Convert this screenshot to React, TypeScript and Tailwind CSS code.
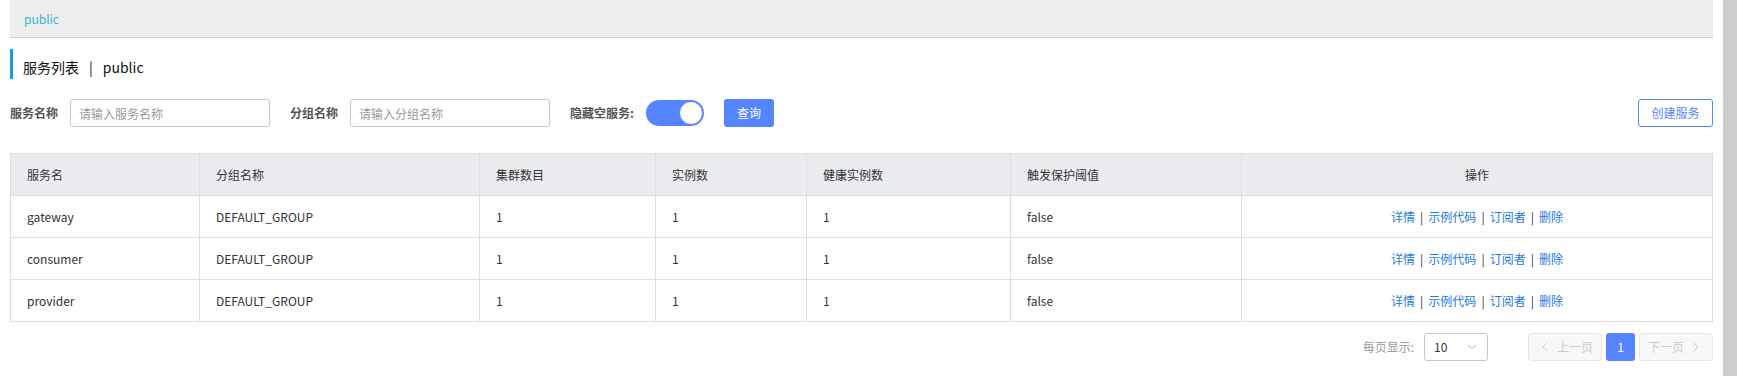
import { ChevronDown, ChevronLeft, ChevronRight } from 'lucide-react';

const FONT = "font-['Noto_Sans_CJK_SC','Noto_Sans',sans-serif]";

const columns = [
  { title: '服务名', width: 'w-[189px]' },
  { title: '分组名称', width: 'w-[280px]' },
  { title: '集群数目', width: 'w-[176px]' },
  { title: '实例数', width: 'w-[151px]' },
  { title: '健康实例数', width: 'w-[204px]' },
  { title: '触发保护阈值', width: 'w-[231px]' },
];

const rows = [
  { name: 'gateway', group: 'DEFAULT_GROUP', clusters: 1, instances: 1, healthy: 1, threshold: 'false' },
  { name: 'consumer', group: 'DEFAULT_GROUP', clusters: 1, instances: 1, healthy: 1, threshold: 'false' },
  { name: 'provider', group: 'DEFAULT_GROUP', clusters: 1, instances: 1, healthy: 1, threshold: 'false' },
];

function Actions() {
  const items = ['详情', '示例代码', '订阅者', '删除'];
  return (
    <div className="flex items-center justify-center">
      {items.map((item, i) => (
        <span key={item} className="flex items-center">
          {i > 0 && <span className="mx-[5px] text-[#333]">|</span>}
          <a className="text-[#1d7ce0] cursor-pointer">{item}</a>
        </span>
      ))}
    </div>
  );
}

export default function App() {
  return (
    <div className={`flex h-[376px] w-[1737px] bg-white text-xs text-[#333] ${FONT}`}>
      <div className="flex-1 px-[10px]">
        {/* ── breadcrumb bar ─────────────────────── */}
        <div className="flex h-[38px] items-center border-b border-[#cfcfcf] bg-[#eeeeee] px-[14px]">
          <span className="text-[#2fb7d6]">public</span>
        </div>

        {/* ── page title ─────────────────────────── */}
        <div className="mt-[11px] flex h-[30px] items-center border-l-[3px] border-[#1a9bd7] pl-[10px] pt-[6px] text-sm text-[#111]">
          <span>服务列表</span>
          <span className="mx-[10px]">|</span>
          <span>public</span>
        </div>

        {/* ── search form ────────────────────────── */}
        <div className="mt-5 flex h-[28px] items-center">
          <label className="mr-3 font-bold text-[#555]">服务名称</label>
          <input
            placeholder="请输入服务名称"
            className="mr-5 h-[28px] w-[200px] rounded-[3px] border border-[#c4c6cf] px-2 text-xs placeholder-[#999] outline-none"
          />
          <label className="mr-3 font-bold text-[#555]">分组名称</label>
          <input
            placeholder="请输入分组名称"
            className="mr-5 h-[28px] w-[200px] rounded-[3px] border border-[#c4c6cf] px-2 text-xs placeholder-[#999] outline-none"
          />
          <label className="mr-3 font-bold text-[#555]">隐藏空服务:</label>
          <div className="mr-5 flex h-[26px] w-[58px] items-center justify-end rounded-full bg-[#5584ff] pr-px">
            <div className="h-[24px] w-[24px] rounded-full border border-[#5584ff] bg-white" />
          </div>
          <button className="h-[28px] w-[50px] rounded-[3px] bg-[#5584ff] text-white">查询</button>
          <div className="flex-1" />
          <button className="h-[28px] w-[75px] rounded-[3px] border border-[#5584ff] bg-white text-[#5584ff]">
            创建服务
          </button>
        </div>

        {/* ── service table ──────────────────────── */}
        <table className="mt-[26px] w-full table-fixed border-collapse border border-[#dcdee3]">
          <thead>
            <tr className="h-[42px] bg-[#ebecf0]">
              {columns.map((c) => (
                <th key={c.title} className={`${c.width} border border-[#dcdee3] px-4 text-left font-normal`}>
                  {c.title}
                </th>
              ))}
              <th className="border border-[#dcdee3] px-4 text-center font-normal">操作</th>
            </tr>
          </thead>
          <tbody>
            {rows.map((r) => (
              <tr key={r.name} className="h-[42px]">
                <td className="border border-[#dcdee3] px-4">{r.name}</td>
                <td className="border border-[#dcdee3] px-4">{r.group}</td>
                <td className="border border-[#dcdee3] px-4">{r.clusters}</td>
                <td className="border border-[#dcdee3] px-4">{r.instances}</td>
                <td className="border border-[#dcdee3] px-4">{r.healthy}</td>
                <td className="border border-[#dcdee3] px-4">{r.threshold}</td>
                <td className="border border-[#dcdee3] px-4">
                  <Actions />
                </td>
              </tr>
            ))}
          </tbody>
        </table>

        {/* ── pagination ─────────────────────────── */}
        <div className="mt-[11px] flex h-[28px] items-center justify-end">
          <span className="mr-[10px] text-[#999]">每页显示:</span>
          <div className="mr-10 flex h-[28px] w-[64px] items-center justify-between rounded-[3px] border border-[#c4c6cf] pl-[9px] pr-2">
            <span className="text-[#333]">10</span>
            <ChevronDown size={14} strokeWidth={1.5} className="text-[#999]" />
          </div>
          <button className="flex h-[28px] w-[74px] items-center justify-center gap-1 rounded-[3px] border border-[#e6e7eb] bg-[#f7f8fa] text-[#ccc]">
            <ChevronLeft size={16} strokeWidth={1.5} />
            上一页
          </button>
          <button className="mx-[4px] h-[28px] w-[29px] rounded-[3px] bg-[#5584ff] text-white">1</button>
          <button className="flex h-[28px] w-[74px] items-center justify-center gap-1 rounded-[3px] border border-[#e6e7eb] bg-[#f7f8fa] text-[#ccc]">
            下一页
            <ChevronRight size={16} strokeWidth={1.5} />
          </button>
        </div>
      </div>

      {/* ── scrollbar strip ──────────────────────── */}
      <div className="w-[14px] bg-[#cdcdcd]" />
    </div>
  );
}
